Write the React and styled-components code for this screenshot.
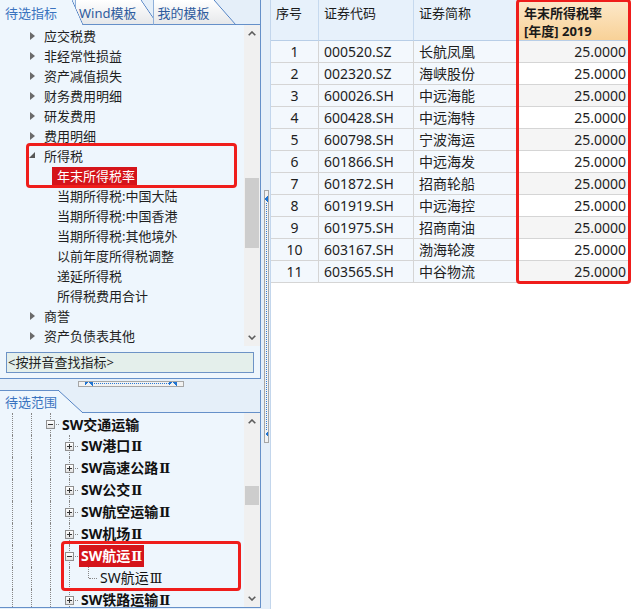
import React from 'react';
import styled, { createGlobalStyle, css } from 'styled-components';

const EDGE = '#6590c9';
const PANEL = '#eef6fd';
const PAGE = '#e5eff9';
const CALLOUT = '#ef1d1b';
const PICK = '#d5141a';

const GlobalStyle = createGlobalStyle`
  * { box-sizing: border-box; }
  html, body { margin: 0; padding: 0; }
  body {
    width: 631px;
    height: 609px;
    overflow: hidden;
    background: ${PAGE};
    font-family: "Noto Sans", "Noto Sans CJK SC", sans-serif;
    font-size: 13px;
    color: #1f1f1f;
  }
`;

const Page = styled.div`
  display: flex;
  width: 631px;
  height: 609px;
  background: ${PAGE};
  overflow: hidden;
`;

const LeftPane = styled.div`
  width: 261px;
  flex: none;
  display: flex;
  flex-direction: column;
`;

/* ---------- tabs ---------- */

const TabStrip = styled.div`
  display: flex;
  height: ${p => p.$h}px;
  flex: none;
`;

const Tab = styled.div`
  position: relative;
  z-index: ${p => (p.$active ? 3 : 1)};
  height: 100%;
  margin-left: ${p => p.$shift || 0}px;
  padding: 0 ${p => p.$pr}px 0 ${p => p.$pl}px;
  display: flex;
  align-items: center;
  white-space: nowrap;
  color: ${p => (p.$active ? '#3a73bf' : '#2f5c9e')};
  line-height: 18px;

  &::before {
    content: '';
    position: absolute;
    inset: 0;
    z-index: -1;
    clip-path: polygon(0 0, calc(100% - ${p => p.$slant}px) 0, 100% 100%, 0 100%);
    ${p =>
      p.$active
        ? css`
            background: ${PANEL};
            border-top: ${p.$topLine ? `1px solid ${EDGE}` : 'none'};
          `
        : css`
            background: linear-gradient(#ffffff, #e6e8ea);
            border-left: 1px solid #8fb0da;
            border-bottom: 1px solid ${EDGE};
          `}
  }

  &::after {
    content: '';
    position: absolute;
    top: 0;
    right: 0;
    width: ${p => p.$slant}px;
    height: 100%;
    background: linear-gradient(
      to top right,
      transparent calc(50% - 0.7px),
      #4f7fc2 50%,
      transparent calc(50% + 0.7px)
    );
  }
`;

const TabFill = styled.div`
  flex: 1;
  border-bottom: 1px solid ${EDGE};
  border-right: 1px solid ${EDGE};
`;

/* ---------- panels ---------- */

const Panel = styled.div`
  position: relative;
  flex: none;
  height: ${p => p.$h}px;
  background: ${PANEL};
  border-right: 1px solid ${EDGE};
  border-bottom: 1px solid ${EDGE};
  display: flex;
  flex-direction: column;
`;

const TreeArea = styled.div`
  display: flex;
  height: ${p => p.$h}px;
  flex: none;
  overflow: hidden;
`;

const TreeList = styled.div`
  flex: 1;
  padding-top: ${p => p.$pt || 0}px;
  padding-left: ${p => p.$pl || 0}px;
  overflow: hidden;
`;

const Callout = styled.div`
  position: absolute;
  z-index: 5;
  top: ${p => p.$top}px;
  left: ${p => p.$left}px;
  width: ${p => p.$w}px;
  height: ${p => p.$h}px;
  border: 3px solid ${CALLOUT};
  border-radius: 4px;
  pointer-events: none;
`;

/* ---------- scrollbar ---------- */

const Scrollbar = styled.div`
  width: 16px;
  flex: none;
  background: #f0f0f0;
  display: flex;
  flex-direction: column;
`;

const ScrollBtn = styled.div`
  height: 17px;
  flex: none;
  display: flex;
  align-items: center;
  justify-content: center;
`;

const Track = styled.div`
  flex: 1;
  padding: 0 1px;
`;

const Thumb = styled.div`
  margin-top: ${p => p.$offset}px;
  height: ${p => p.$size}px;
  background: #cdcdcd;
`;

const Chevron = ({ up }) => (
  <svg width="8" height="5" viewBox="0 0 8 5">
    <polyline
      points={up ? '0.7,4.3 4,1 7.3,4.3' : '0.7,0.7 4,4 7.3,0.7'}
      fill="none"
      stroke="#5c5c5c"
      strokeWidth="1.6"
    />
  </svg>
);

const VScroll = ({ offset, size }) => (
  <Scrollbar>
    <ScrollBtn>
      <Chevron up />
    </ScrollBtn>
    <Track>
      <Thumb $offset={offset} $size={size} />
    </Track>
    <ScrollBtn>
      <Chevron />
    </ScrollBtn>
  </Scrollbar>
);

/* ---------- indicator tree ---------- */

const IndRow = styled.div`
  display: flex;
  align-items: center;
  height: 20px;
  padding-left: ${p => (p.$child ? 13 : 0)}px;
`;

const CaretSlot = styled.span`
  width: 39px;
  flex: none;
  display: flex;
  justify-content: flex-end;
  padding-right: 4px;
`;

const Caret = styled.span`
  width: 0;
  height: 0;
  ${p =>
    p.$open
      ? css`
          border-left: 6px solid transparent;
          border-bottom: 6px solid #575757;
          transform: translateY(-1px);
        `
      : css`
          border-top: 4px solid transparent;
          border-bottom: 4px solid transparent;
          border-left: 5px solid #6a6a6a;
        `}
`;

const IndLabel = styled.span`
  padding: 0 2px 0 5px;
  line-height: 19px;
  white-space: nowrap;
  ${p =>
    p.$selected &&
    css`
      background: ${PICK};
      color: #fff;
    `}
`;

const SearchBar = styled.div`
  flex: 1;
  padding: 6px 6px 0 6px;
`;

const SearchBox = styled.div`
  width: 248px;
  height: 21px;
  border: 1px solid #6d93c6;
  background: #e4efeb;
  padding-left: 1px;
  line-height: 19px;
  color: #1f1f1f;
`;

/* ---------- splitters ---------- */

const HSplit = styled.div`
  height: 11px;
  flex: none;
  padding: 2px 0 0 78px;
`;

const HHandle = styled.div`
  position: relative;
  width: 106px;
  height: 6px;
  border: 1px solid #a6a6a6;
  background: #f2f2f2;

  &::before {
    content: '';
    position: absolute;
    left: 12px;
    right: 12px;
    top: 1px;
    border-top: 1px dotted #2a7ad6;
  }
  &::after {
    content: '';
    position: absolute;
    top: 0;
    left: 6px;
    width: 92px;
    height: 4px;
    background:
      linear-gradient(to bottom right, #1f74d2 50%, transparent 50%) 0 0 / 4px 4px no-repeat,
      linear-gradient(to bottom left, #1f74d2 50%, transparent 50%) 4px 0 / 4px 4px no-repeat,
      linear-gradient(to bottom right, #1f74d2 50%, transparent 50%) 84px 0 / 4px 4px no-repeat,
      linear-gradient(to bottom left, #1f74d2 50%, transparent 50%) 88px 0 / 4px 4px no-repeat;
  }
`;

const VSplit = styled.div`
  width: 9px;
  flex: none;
  padding: 190px 0 0 3px;
`;

const VHandle = styled.div`
  position: relative;
  width: 5px;
  height: 253px;
  border: 1px solid #a6a6a6;
  background: #f2f2f2;

  &::before {
    content: '';
    position: absolute;
    left: 1px;
    top: 12px;
    bottom: 12px;
    border-left: 1px dotted #2a7ad6;
  }
  &::after {
    content: '';
    position: absolute;
    left: 0;
    top: 5px;
    width: 3px;
    height: 241px;
    background:
      linear-gradient(to top left, #1f74d2 50%, transparent 50%) 0 0 / 3px 3px no-repeat,
      linear-gradient(to bottom left, #1f74d2 50%, transparent 50%) 0 3px / 3px 3px no-repeat,
      linear-gradient(to top left, #1f74d2 50%, transparent 50%) 0 235px / 3px 3px no-repeat,
      linear-gradient(to bottom left, #1f74d2 50%, transparent 50%) 0 238px / 3px 3px no-repeat;
  }
`;

/* ---------- sector tree ---------- */

const SecRow = styled.div`
  display: flex;
  height: 22px;
`;

const dots = '1px dotted #878787';

const Guide = styled.span`
  position: relative;
  flex: none;
  width: 19px;

  &::before {
    content: '';
    position: absolute;
    left: 9px;
    top: 0;
    bottom: 0;
    border-left: ${dots};
  }
`;

const Joint = styled.span`
  position: relative;
  flex: none;
  width: 19px;

  &::before {
    content: '';
    position: absolute;
    left: 9px;
    top: 0;
    bottom: ${p => (p.$last ? '11px' : '0')};
    border-left: ${dots};
  }
  &::after {
    content: '';
    position: absolute;
    left: 10px;
    right: 1px;
    top: 11px;
    border-top: ${dots};
  }
`;

const Toggle = styled.span`
  position: absolute;
  z-index: 1;
  left: 5px;
  top: 7px;
  width: 9px;
  height: 9px;
  border: 1px solid #8f8f8f;
  background: linear-gradient(#ffffff, #e2e2e2);

  &::before {
    content: '';
    position: absolute;
    left: 1px;
    right: 1px;
    top: 3px;
    height: 1px;
    background: #333;
  }
  ${p =>
    p.$plus &&
    css`
      &::after {
        content: '';
        position: absolute;
        top: 1px;
        bottom: 1px;
        left: 3px;
        width: 1px;
        background: #333;
      }
    `}
`;

const SecLabel = styled.span`
  align-self: center;
  padding: 0 2px;
  line-height: 21px;
  font-size: 14px;
  font-weight: ${p => (p.$plain ? 400 : 700)};
  white-space: nowrap;
  color: #111;
  ${p =>
    p.$selected &&
    css`
      background: ${PICK};
      color: #fff;
    `}
`;

const Grade = styled.span`
  font-family: "DejaVu Serif", "Noto Sans CJK SC", serif;
  font-size: 13px;
  margin-left: 1px;
`;

/* ---------- data grid ---------- */

const Grid = styled.div`
  position: relative;
  width: 361px;
  flex: none;
  background: #fff;
  border-left: 1px solid #c3d6ec;
`;

const GridRow = styled.div`
  display: grid;
  grid-template-columns: 48px 95px 105px 112px;
`;

const HeadCell = styled.div`
  height: 41px;
  padding: 4px 5px 0;
  line-height: 18px;
  border-bottom: 1px solid #b8cee7;
  border-right: ${p => (p.$hot ? 'none' : '1px solid #c6d9ee')};
  background: ${p => (p.$hot ? 'linear-gradient(#fde9cb, #f8d197)' : '#e7f1fb')};
  font-weight: ${p => (p.$hot ? 700 : 400)};
  color: #1a1a1a;
  white-space: nowrap;
`;

const Cell = styled.div`
  height: 22px;
  line-height: 21px;
  font-size: 14px;
  padding: 0 5px;
  text-align: ${p => p.$align || 'left'};
  border-bottom: 1px solid #d5d5d5;
  border-right: ${p => (p.$value ? 'none' : '1px solid #d5d5d5')};
  background: ${p => (p.$value ? (p.$odd ? '#f5f5f5' : '#ffffff') : '#f3f8fd')};
  color: #1e1e1e;
  white-space: nowrap;
`;

/* ---------- data ---------- */

const indicators = [
  { label: '应交税费' },
  { label: '非经常性损益' },
  { label: '资产减值损失' },
  { label: '财务费用明细' },
  { label: '研发费用' },
  { label: '费用明细' },
  { label: '所得税', open: true },
  { label: '年末所得税率', child: true, selected: true },
  { label: '当期所得税:中国大陆', child: true },
  { label: '当期所得税:中国香港', child: true },
  { label: '当期所得税:其他境外', child: true },
  { label: '以前年度所得税调整', child: true },
  { label: '递延所得税', child: true },
  { label: '所得税费用合计', child: true },
  { label: '商誉' },
  { label: '资产负债表其他' },
];

const sectors = [
  { name: 'SW交通运输', grade: '', level: 2, box: 'minus' },
  { name: 'SW港口', grade: 'Ⅱ', level: 3, box: 'plus' },
  { name: 'SW高速公路', grade: 'Ⅱ', level: 3, box: 'plus' },
  { name: 'SW公交', grade: 'Ⅱ', level: 3, box: 'plus' },
  { name: 'SW航空运输', grade: 'Ⅱ', level: 3, box: 'plus' },
  { name: 'SW机场', grade: 'Ⅱ', level: 3, box: 'plus' },
  { name: 'SW航运', grade: 'Ⅱ', level: 3, box: 'minus', selected: true },
  { name: 'SW航运', grade: 'Ⅲ', level: 4, last: true, plain: true },
  { name: 'SW铁路运输', grade: 'Ⅱ', level: 3, box: 'plus' },
];

const stocks = [
  ['000520.SZ', '长航凤凰'],
  ['002320.SZ', '海峡股份'],
  ['600026.SH', '中远海能'],
  ['600428.SH', '中远海特'],
  ['600798.SH', '宁波海运'],
  ['601866.SH', '中远海发'],
  ['601872.SH', '招商轮船'],
  ['601919.SH', '中远海控'],
  ['601975.SH', '招商南油'],
  ['603167.SH', '渤海轮渡'],
  ['603565.SH', '中谷物流'],
];

export default function App() {
  return (
    <>
      <GlobalStyle />
      <Page>
        <LeftPane>
          <TabStrip $h={25}>
            <Tab $active $pl={5} $pr={26} $slant={11}>
              待选指标
            </Tab>
            <Tab $shift={-8} $pl={4} $pr={21} $slant={17}>
              Wind模板
            </Tab>
            <Tab $shift={-5} $pl={5} $pr={26} $slant={22}>
              我的模板
            </Tab>
            <TabFill />
          </TabStrip>

          <Panel $h={354}>
            <TreeArea $h={321}>
              <TreeList $pt={1}>
                {indicators.map(item => (
                  <IndRow key={item.label} $child={item.child}>
                    <CaretSlot>{!item.child && <Caret $open={item.open} />}</CaretSlot>
                    <IndLabel $selected={item.selected}>{item.label}</IndLabel>
                  </IndRow>
                ))}
              </TreeList>
              <VScroll offset={136} size={70} />
            </TreeArea>
            <SearchBar>
              <SearchBox>&lt;按拼音查找指标&gt;</SearchBox>
            </SearchBar>
            <Callout $top={118} $left={26} $w={211} $h={45} />
          </Panel>

          <HSplit>
            <HHandle />
          </HSplit>

          <TabStrip $h={23}>
            <Tab $active $topLine $pl={5} $pr={26} $slant={25}>
              待选范围
            </Tab>
            <TabFill />
          </TabStrip>

          <Panel $h={195}>
            <TreeArea $h={194}>
              <TreeList $pl={3}>
                {sectors.map(item => (
                  <SecRow key={item.name + item.grade}>
                    {Array.from({ length: item.level }, (_, i) => (
                      <Guide key={i} />
                    ))}
                    <Joint $last={item.last}>
                      {item.box && <Toggle $plus={item.box === 'plus'} />}
                    </Joint>
                    <SecLabel $selected={item.selected} $plain={item.plain}>
                      {item.name}
                      {item.grade && <Grade>{item.grade}</Grade>}
                    </SecLabel>
                  </SecRow>
                ))}
              </TreeList>
              <VScroll offset={56} size={19} />
            </TreeArea>
            <Callout $top={128} $left={61} $w={180} $h={50} />
          </Panel>
        </LeftPane>

        <VSplit>
          <VHandle />
        </VSplit>

        <Grid>
          <GridRow>
            <HeadCell>序号</HeadCell>
            <HeadCell>证券代码</HeadCell>
            <HeadCell>证券简称</HeadCell>
            <HeadCell $hot>
              年末所得税率
              <br />
              [年度] 2019
            </HeadCell>
          </GridRow>
          {stocks.map(([code, name], i) => (
            <GridRow key={code}>
              <Cell $align="center">{i + 1}</Cell>
              <Cell>{code}</Cell>
              <Cell>{name}</Cell>
              <Cell $value $odd={i % 2 === 0} $align="right">
                25.0000
              </Cell>
            </GridRow>
          ))}
          <Callout $top={-1} $left={245} $w={115} $h={285} />
        </Grid>
      </Page>
    </>
  );
}
